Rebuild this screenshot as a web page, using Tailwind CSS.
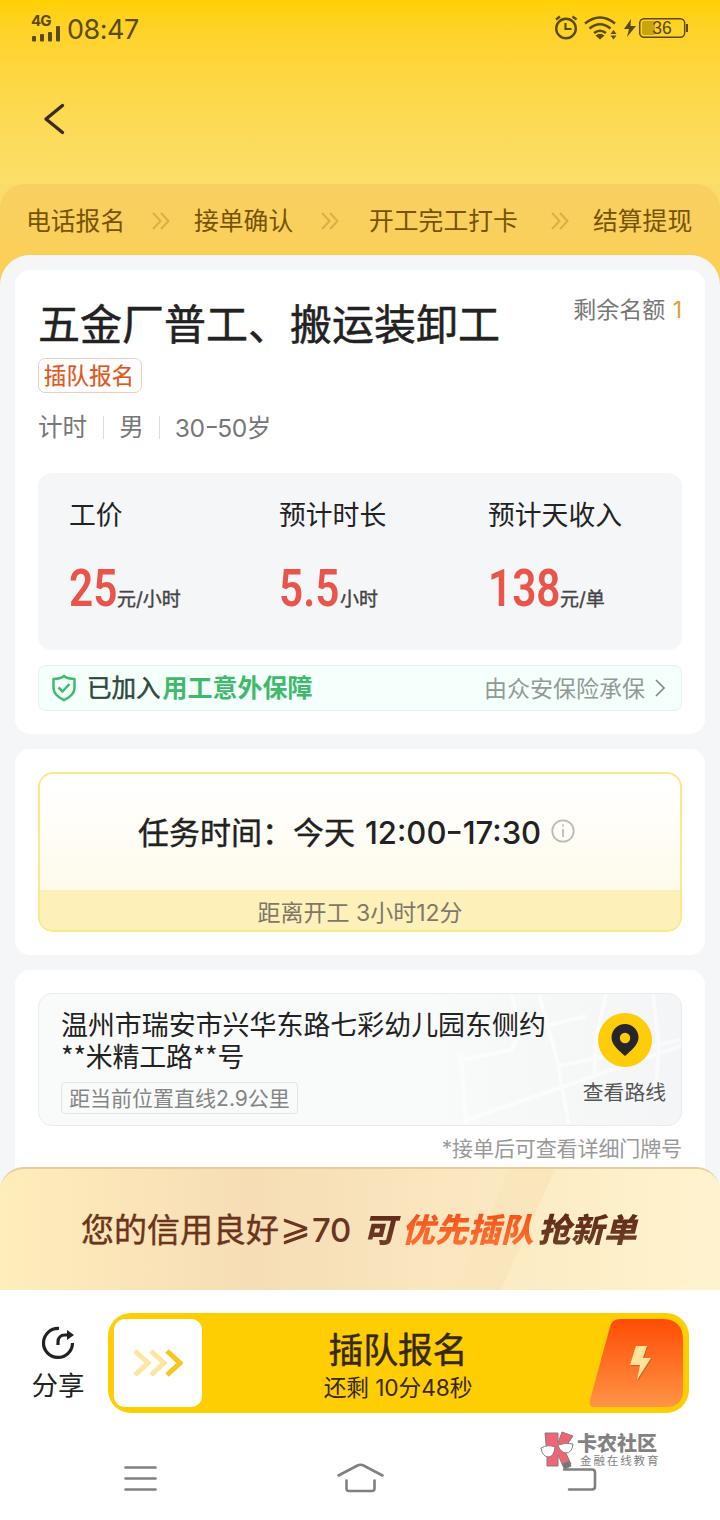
<!DOCTYPE html>
<html lang="zh-CN">
<head>
<meta charset="utf-8">
<title>五金厂普工、搬运装卸工</title>
<script src="https://cdn.jsdelivr.net/npm/@tailwindcss/browser@4"></script>
</head>
<body class="w-[720px] h-[1520px] overflow-hidden bg-white font-['Inter','Noto_Sans_CJK_SC',sans-serif] text-[#222] whitespace-nowrap">
<div class="flex flex-col h-[1520px]">

  <!-- Header -->
  <header class="h-[184px] shrink-0 bg-linear-to-b from-[#ffd000] to-[#fbdf6a]">
    <div class="h-[56px] flex items-center justify-between pl-[31px] pr-[32px] text-[#5a4a14]">
      <div class="flex items-center">
        <div class="w-[30px] h-[28px] flex flex-col justify-between">
          <span class="text-[15px] leading-[13px] h-[13px] font-bold tracking-[-0.800px]">4G</span>
          <svg width="30" height="17" viewBox="0 0 30 17" fill="currentColor" class="-mt-[3px]"><rect x="1" y="11" width="4" height="5.500" rx="1"/><rect x="9" y="9" width="4" height="7.500" rx="1"/><rect x="17" y="7" width="4" height="9.500" rx="1"/><rect x="25" y="1" width="4" height="15.500" rx="1"/></svg>
        </div>
        <span class="ml-[6px] mt-[3px] text-[27px] leading-[30px] tracking-[-0.500px]">08:47</span>
      </div>
      <svg width="134" height="28" viewBox="554 14 134 28" fill="none" stroke="currentColor">
        <circle cx="566" cy="28.500" r="9.800" stroke-width="2.400"/><path d="M565.500 23v6h6M556 19.500l4-3M572.500 16.500l4 3" stroke-width="2.200"/>
        <path d="M585 23.500q15-12 30 0M589.500 28.500q10.500-8.500 21 0M594 33q6-4.500 12 0" stroke-width="2.500"/><path d="M595.500 35.500q4.500-3.500 9 0l-4.500 4z" fill="currentColor" stroke="none"/><path d="M610.500 34l3-4 3 4zM610.500 35.500l3 4 3-4z" fill="currentColor" stroke="none"/>
        <path d="M631 19l-7 10h5l-2 8 9-11h-5.500z" fill="currentColor" stroke="none"/>
        <rect x="642" y="21" width="13" height="14" rx="2" fill="#c9a40c" stroke="none"/><rect x="639.700" y="18.700" width="45" height="18.600" rx="4.500" stroke-width="1.500"/><path d="M687 24v8" stroke-width="2"/>
        <text x="662" y="34" text-anchor="middle" font-size="17.500" font-family="Liberation Sans" fill="currentColor" stroke="none">36</text>
      </svg>
    </div>
    <svg class="ml-[42px] mt-[46px]" width="24" height="34" viewBox="0 0 24 34" fill="none" stroke="#3b2c22" stroke-width="3.400" stroke-linecap="round" stroke-linejoin="round"><path d="M20.500 3.500L4 17l16.500 13.500"/></svg>
  </header>

  <!-- Steps -->
  <div class="h-[101px] shrink-0 bg-[#fbdc68]">
    <div class="h-[101px] rounded-t-[24px] bg-linear-to-b from-[#f9cf62] to-[#fbd055] pl-[26px]">
      <div class="flex h-[74px] items-center text-[24.800px] text-[#765404]">
        <span class="mt-[1px] w-[126px]">电话报名</span>
        <svg class="mr-[24px]" width="18" height="18" viewBox="0 0 18 18" fill="none" stroke="#dcae45" stroke-width="2"><path d="M1 1l7.500 8L1 17M9 1l7.500 8L9 17"/></svg>
        <span class="mt-[1px] w-[127px]">接单确认</span>
        <svg class="mr-[30px]" width="18" height="18" viewBox="0 0 18 18" fill="none" stroke="#dcae45" stroke-width="2"><path d="M1 1l7.500 8L1 17M9 1l7.500 8L9 17"/></svg>
        <span class="mt-[1px] w-[182px]">开工完工打卡</span>
        <svg class="mr-[24px]" width="18" height="18" viewBox="0 0 18 18" fill="none" stroke="#dcae45" stroke-width="2"><path d="M1 1l7.500 8L1 17M9 1l7.500 8L9 17"/></svg>
        <span class="mt-[1px]">结算提现</span>
      </div>
    </div>
  </div>

  <!-- Content -->
  <main class="-mt-[30px] h-[936px] shrink-0 overflow-hidden rounded-t-[30px] bg-[#f4f6f8] px-[15px] pt-[15px] flex flex-col gap-[15px]">

    <section class="flex h-[464px] shrink-0 flex-col rounded-[15px] bg-white px-[23px] pt-[32px]">
      <div class="flex justify-between">
        <h1 class="mt-[1px] h-[43px] text-[42px] leading-[44px] [-webkit-text-stroke:0.5px_#222]">五金厂普工、搬运装卸工</h1>
        <span class="-mt-[7px] text-[23px] leading-[30px] text-[#777]">剩余名额 <b class="ml-[1px] font-normal text-[#e0a030]">1</b></span>
      </div>
      <div class="mt-[12px] flex h-[35px] w-[104px] items-center justify-center rounded-[7px] border border-[#f3cdb8] pr-[2px] text-[22.600px] text-[#e0561c] [-webkit-text-stroke:0.2px_#e0561c]">插队报名</div>
      <div class="mt-[19px] flex h-[30px] items-center text-[24.600px] text-[#777]">
        <span>计时</span><i class="ml-[16px] mr-[15px] h-[23px] w-px bg-[#ddd]"></i><span>男</span><i class="ml-[15px] mr-[15px] h-[23px] w-px bg-[#ddd]"></i><span class="tracking-[-0.500px]">30<span class="mx-[1px] inline-block scale-x-125 align-[2px]">-</span>50岁</span>
      </div>
      <div class="mt-[31px] grid h-[177px] grid-cols-[210px_209px_190px] rounded-[14px] bg-[#f4f6f8] pl-[31px] pt-[27px] text-[26.800px]">
        <div><div class="leading-[30px]">工价</div><div class="mt-[29px] flex h-[60px] items-baseline"><span class="inline-block w-[48px] origin-left scale-x-[0.83] font-['Roboto'] text-[51px] leading-[60px] font-semibold text-[#e9544b]">25</span><span class="text-[19px] text-[#444] [-webkit-text-stroke:0.4px_#444]">元/小时</span></div></div>
        <div><div class="leading-[30px]">预计时长</div><div class="mt-[29px] flex h-[60px] items-baseline"><span class="inline-block w-[61px] origin-left scale-x-[0.83] font-['Roboto'] text-[51px] leading-[60px] font-semibold text-[#e9544b]">5.5</span><span class="text-[19px] text-[#444] [-webkit-text-stroke:0.4px_#444]">小时</span></div></div>
        <div><div class="leading-[30px]">预计天收入</div><div class="mt-[29px] flex h-[60px] items-baseline"><span class="inline-block w-[72px] origin-left scale-x-[0.83] font-['Roboto'] text-[51px] leading-[60px] font-semibold text-[#e9544b]">138</span><span class="text-[19px] text-[#444] [-webkit-text-stroke:0.4px_#444]">元/单</span></div></div>
      </div>
      <div class="mt-[15px] flex h-[46px] items-center rounded-[8px] border border-[#def5ec] bg-[#f5fffb] pl-[12px] pr-[15px]">
        <svg width="26" height="28" viewBox="0 0 26 28" fill="none" stroke="#3fba6d" stroke-width="2.500" stroke-linejoin="round"><path d="M13 2C10 4.500 6 5 2.500 5v9c0 6 5 9.500 10.500 12 5.500-2.500 10.500-6 10.500-12V5C20 5 16 4.500 13 2z"/><path d="M7.500 13.500l4 4 7-7.500"/></svg>
        <span class="ml-[10px] text-[24.500px] text-[#30493d] [-webkit-text-stroke:0.5px_#30493d]">已加入</span><span class="ml-[2px] mt-[1px] text-[25px] font-bold text-[#3fba6d]">用工意外保障</span>
        <span class="ml-auto mt-[3px] text-[23px] text-[#919a96]">由众安保险承保</span>
        <svg class="ml-[9px]" width="12" height="18" viewBox="0 0 12 18" fill="none" stroke="#888" stroke-width="1.700"><path d="M2 1l8 8-8 8"/></svg>
      </div>
    </section>

    <section class="h-[206px] shrink-0 rounded-[15px] bg-white px-[23px] pt-[23px]">
      <div class="h-[160px] overflow-hidden rounded-[15px] border-2 border-[#fae88a] bg-linear-to-b from-white to-[#fefae6]">
        <div class="flex h-[116px] items-center pl-[98px]">
          <span class="mt-[2px] text-[31px] [-webkit-text-stroke:0.4px_#222]">任务时间：今天</span><span class="ml-[10px] mt-[1px] text-[31px] font-medium">12:00<span class="mx-px inline-block scale-x-125 align-[2px]">-</span>17:30</span>
          <svg class="ml-[10px] -mt-[2px]" width="24" height="24" viewBox="0 0 24 24" fill="none" stroke="#bbb" stroke-width="1.800"><circle cx="12" cy="12" r="10.700"/><path d="M12 10v8M12 5.500v2"/></svg>
        </div>
        <div class="flex h-[40px] items-center justify-center bg-[#fdf0b8] pt-[6px] text-[23px] text-[#7d7869]">距离开工 3小时12分</div>
      </div>
    </section>

    <section class="h-[240px] shrink-0 rounded-[15px] bg-white px-[23px] pt-[23px]">
      <div class="relative flex h-[133px] justify-between overflow-hidden rounded-[14px] border border-[#e9ecec] bg-linear-to-r from-[#f9fbfa] from-60% to-[#f3f5f6] pl-[22px] pr-[15px] pt-[15px]">
        <svg class="absolute right-0 top-0" width="240" height="131" viewBox="0 0 240 131" fill="none" stroke="#fff" stroke-width="4" opacity=".5"><path d="M20 66L70 56l10-18 65-16M70 0l10 38M98 0l18 66 12 65M20 60l5 71M25 126l215-74M118 72l122-26M165 0l-10 45-2 40M212 0l6 50-4 60"/></svg>
        <div class="relative">
          <div class="mt-[1px] h-[32px] text-[26.950px] leading-[31px]">温州市瑞安市兴华东路七彩幼儿园东侧约</div>
          <div class="h-[32px] font-['Noto_Sans_CJK_SC'] text-[26.950px] leading-[28px] tracking-[-0.200px]">**米精工路**号</div>
          <div class="mt-[8px] flex h-[32px] w-[237px] items-center justify-center rounded-[4px] border border-[#e3e5e5] pt-[2px] text-[21px] text-[#858585]">距当前位置直线2.9公里</div>
        </div>
        <div class="relative flex flex-col items-center pt-[4px]">
          <svg class="ml-[2px]" width="54" height="54" viewBox="0 0 54 54"><circle cx="27" cy="27" r="27" fill="#fecc08"/><path d="M27 43C21 37.500 13.500 32 13.500 24.500a13.500 13.500 0 0 1 27 0C40.500 32 33 37.500 27 43z" fill="#26262a"/><circle cx="27" cy="25" r="5.200" fill="#fecc08"/></svg>
          <span class="mt-[11px] text-[20.800px] leading-[30px] text-[#555]">查看路线</span>
        </div>
      </div>
      <div class="mt-[8px] text-right text-[21px] leading-[30px] tracking-[-0.100px] text-[#999]">*接单后可查看详细门牌号</div>
    </section>
  </main>

  <!-- Credit banner -->
  <div class="relative -mt-[24px] h-[123px] shrink-0 overflow-hidden rounded-t-[24px] border-t-2 border-[#e3ce9f] bg-linear-to-r from-[#ffedbb] via-[#f6ddb5] via-35% to-[#fff3ce]">
    <svg class="absolute inset-0" width="720" height="121" viewBox="0 0 720 121"><defs><linearGradient id="sheen"><stop offset="0" stop-color="#fcebc3"/><stop offset="1" stop-color="#fff3cf"/></linearGradient></defs><path d="M509 0H720V121H456z" fill="#fae6bd"/><path d="M555 0H720V121H501z" fill="url(#sheen)"/></svg>
    <div class="relative flex h-[121px] items-center pl-[81px] pt-[2px] text-[33px]">
      <span class="text-[#6b341c] [-webkit-text-stroke:0.400px_#6b341c]">您的信用良好</span>
      <span class="-mt-[6px] ml-[1px] w-[32px] overflow-visible font-['DejaVu_Sans'] text-[37px] text-[#6b341c]">⩾</span>
      <span class="text-[33px] font-medium tracking-[-0.400px] text-[#6b341c]">70</span>
      <span class="ml-[12px] flex font-black italic"><span class="bg-linear-to-b from-[#5c2417] to-[#754629] bg-clip-text pr-[6px] text-transparent">可</span><span class="bg-linear-to-b from-[#f24a10] to-[#ff7a38] bg-clip-text pr-[4px] text-transparent">优先插队</span><span class="bg-linear-to-b from-[#5c2417] to-[#754629] bg-clip-text pr-[6px] text-transparent">抢新单</span></span>
    </div>
  </div>

  <!-- Action bar -->
  <div class="flex h-[123px] shrink-0 bg-white pt-[23px]">
    <div class="flex w-[108px] flex-col items-center pt-[13px] pl-[8px]">
      <svg width="34" height="34" viewBox="0 0 34 34" fill="none" stroke="#222" stroke-width="3.200"><path d="M18 2.500A14.500 14.500 0 1 0 31.500 17" stroke-linecap="butt"/><path d="M17 19v-3c0-4 2.500-7 7-7h3"/><path d="M26 4l7 5-7 5z" fill="#222" stroke="none"/></svg>
      <span class="mt-[10px] text-[26.500px] leading-[30px]">分享</span>
    </div>
    <div class="flex h-[100px] w-[581px] justify-between rounded-[23px] bg-[#fecd02] p-[6px]">
      <div class="flex h-[88px] w-[88px] items-center justify-center rounded-[11px] bg-white">
        <svg width="50" height="30" viewBox="0 0 50 30" fill="none" stroke="#fde69f" stroke-width="5"><path d="M2 3l13 12L2 27M18 3l13 12-13 12"/><path d="M34 3l13 12-13 12" stroke="#fac51f"/></svg>
      </div>
      <div class="ml-[5px] flex flex-col items-center pt-[11px] text-[#352814]">
        <span class="text-[34.800px] leading-[40px] [-webkit-text-stroke:0.5px_#352814]">插队报名</span>
        <span class="mt-[3px] text-[22.700px] leading-[30px] tracking-[-0.100px]">还剩 10分48秒</span>
      </div>
      <svg width="94" height="88" viewBox="0 0 94 88"><defs><linearGradient id="hot" x2="0" y2="1"><stop stop-color="#ff4c05"/><stop offset="1" stop-color="#ff9446"/></linearGradient></defs><path d="M31 0H73Q94 0 94 21V71Q94 88 77 88H5Q-1 88 1 81L21 8Q23 0 31 0z" fill="url(#hot)"/><path d="M48 28h11l-4 12h8L49 62l3-15H42z" fill="#b55322" opacity=".6"/><path d="M47 27h11l-4 12h8L48 61l3-15H41z" fill="#ffe39a"/></svg>
    </div>
  </div>

  <!-- System navigation -->
  <nav class="relative flex h-[107px] items-start pl-[124px] pt-[49px]">
    <svg width="33" height="32" viewBox="0 0 33 32" stroke="#808080" stroke-width="2.600" stroke-linecap="round"><path d="M1.500 5.500h30M1.500 16.500h30M1.500 27.500h30"/></svg>
    <svg class="ml-[180px]" width="47" height="32" viewBox="0 0 47 32" fill="none" stroke="#808080" stroke-width="2.600" stroke-linecap="round" stroke-linejoin="round"><path d="M1.500 13.500L20.500 3.500Q23.500 2 26.500 3.500L45.500 13.500M9.500 18.500v8q0 2.500 2.500 2.500h23q2.500 0 2.500-2.500v-8"/></svg>
    <svg class="ml-[178px]" width="36" height="32" viewBox="0 0 36 32" fill="none" stroke="#808080" stroke-width="2.600" stroke-linecap="round"><path d="M2 7.500h28q3 0 3 3v14q0 3-3 3H7"/></svg>
    <div class="absolute left-[540px] top-[18px] flex">
      <svg width="34" height="38" viewBox="0 0 34 38" stroke="#8b7b7d" stroke-width="1" stroke-linejoin="round"><path d="M5 2h13v10l4-11 11 4-9 13 7 15-7 4-6-13v11H7V24z" fill="#ee6576"/><path d="M1 17q7-4 14-1-1 10-7 10-6-1-7-9zM18 14q8-3 15-1-1 9-7 9-6-1-8-8z" fill="#fff"/><path d="M22 33l7-3 2 5-6 3z" fill="#777"/></svg>
      <div class="ml-[3px] text-[#828282]">
        <div class="mt-[1px] text-[20px] font-black leading-[24px]">卡农社区</div>
        <div class="-mt-[2px] ml-[3px] text-[11.500px] leading-[14px] tracking-[1.900px]">金融在线教育</div>
      </div>
    </div>
  </nav>
</div>
</body>
</html>
